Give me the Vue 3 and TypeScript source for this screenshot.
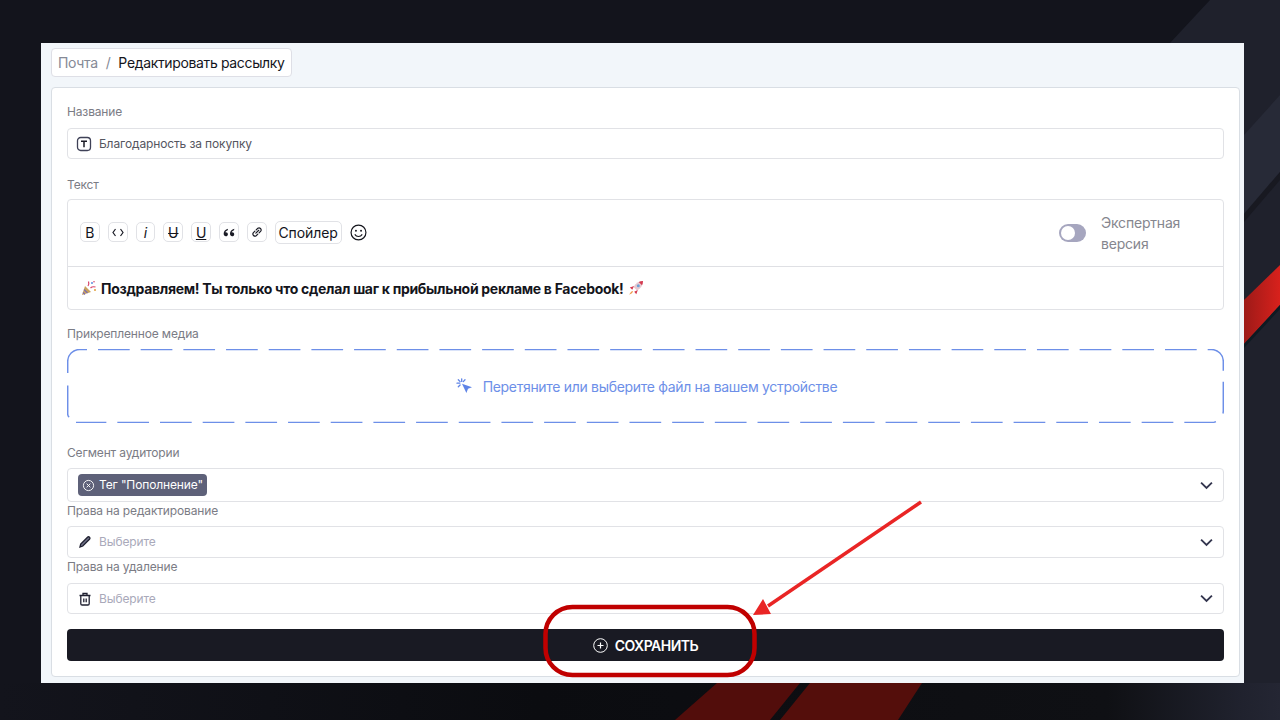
<script setup lang="ts">
</script>

<template>
  <div class="page">
    <svg class="backdrop" viewBox="0 0 1280 720" aria-hidden="true">
      <defs>
        <linearGradient id="fade" x1="0" x2="1" y1="0" y2="0">
          <stop offset="0" stop-color="#13141c" />
          <stop offset=".42" stop-color="#0b0c10" />
          <stop offset=".865" stop-color="#0f1014" />
          <stop offset=".97" stop-color="#20222e" />
          <stop offset="1" stop-color="#242633" />
        </linearGradient>
        <linearGradient id="red" x1="0" x2="1" y1="0" y2="0">
          <stop offset="0" stop-color="#9d1a18" />
          <stop offset="1" stop-color="#d8211c" />
        </linearGradient>
      </defs>
      <rect width="1280" height="720" fill="#13141c" />
      <polygon points="1170,43 1210,0 1280,0 1280,720 1100,720 1100,43" fill="#1f212c" />
      <polygon points="1244,135 1280,95 1280,172 1244,214" fill="#272a37" />
      <polygon points="1244,214 1280,172 1280,180 1244,222" fill="#181921" />
      <polygon points="1244,300 1280,265 1280,305 1244,344" fill="url(#red)" />
      <polygon points="1244,344 1280,305 1280,309 1244,348" fill="#0e1a22" />
      <rect y="683" width="1280" height="37" fill="url(#fade)" />
      <polygon points="717,683 800,683 770,720 675,720" fill="#520d0b" />
      <polygon points="810,683 922,683 898,720 780,720" fill="#540e0b" />
    </svg>

    <main class="panel">
      <nav class="crumbs">
        <span class="crumb-muted">Почта</span>
        <span class="crumb-muted">/</span>
        <span class="crumb-current">Редактировать рассылку</span>
      </nav>

      <section class="card">
        <label class="label gap-9">Название</label>
        <div class="field h31 name-field">
          <svg class="ico" viewBox="0 0 16 16" fill="none" stroke="#3f4157" stroke-width="1.3" aria-hidden="true">
            <rect x="1.5" y="1.5" width="13" height="13" rx="3.2" />
            <path d="M5 5.2h6M8 5.2v6" stroke="#1a1b25" stroke-width="1.5" />
          </svg>
          <span class="value">Благодарность за покупку</span>
        </div>

        <label class="label top-17 gap-7">Текст</label>
        <div class="editor">
          <div class="toolbar">
            <div class="tools">
              <button class="tool">B</button>
              <button class="tool">
                <svg width="12" height="9" viewBox="0 0 12 9" fill="none" stroke="#1a1b25" stroke-width="1.2" aria-hidden="true"><path d="M3.500 1 1 4.500 3.500 8M8.500 1 11 4.500 8.500 8" /></svg>
              </button>
              <button class="tool italic">i</button>
              <button class="tool strike">U</button>
              <button class="tool under">U</button>
              <button class="tool">
                <svg width="12" height="9" viewBox="0 0 11 8" fill="#1a1b25" aria-hidden="true"><path d="M4.600.6C2.200 1.400.6 2.800.6 5.100c0 1.400.9 2.300 2 2.300s1.900-.8 1.900-1.900-.8-1.800-1.900-1.800c-.2 0-.4 0-.5.1.2-.8 1-1.400 2.200-1.900zM10.400.6C8 1.400 6.400 2.800 6.400 5.100c0 1.400.9 2.300 2 2.300s1.900-.8 1.900-1.900-.8-1.800-1.900-1.800c-.2 0-.4 0-.5.1.2-.8 1-1.400 2.200-1.900z" /></svg>
              </button>
              <button class="tool">
                <svg width="14" height="14" viewBox="0 0 12 12" fill="none" stroke="#1a1b25" stroke-width="1" stroke-linecap="round" aria-hidden="true"><path d="M5 7 7.500 4.500M4.200 5.300 2.800 6.700a1.800 1.800 0 0 0 2.500 2.500l1.400-1.400M5.300 4.200l1.400-1.400a1.800 1.800 0 0 1 2.500 2.500L7.800 6.700" /></svg>
              </button>
              <button class="tool spoiler">Спойлер</button>
              <svg class="smile" viewBox="0 0 16 16" fill="none" stroke="#14151c" stroke-width="1.1" aria-hidden="true">
                <circle cx="8" cy="8" r="7" />
                <circle cx="5.600" cy="6.300" r=".9" fill="#14151c" stroke="none" />
                <circle cx="10.400" cy="6.300" r=".9" fill="#14151c" stroke="none" />
                <path d="M4.500 9.800c.8 1.300 2 2 3.500 2s2.700-.7 3.500-2" />
              </svg>
            </div>
            <div class="expert">
              <span class="toggle"><span class="knob"></span></span>
              <span class="expert-text">Экспертная версия</span>
            </div>
          </div>
          <div class="message">
            <svg class="emoji" viewBox="0 0 16 16" aria-hidden="true">
              <polygon points="1,15 4,6 10,12" fill="#c9a25c" />
              <path d="M2 12.500l2 2M3 9.500l3.500 3.500" stroke="#7b6bb0" stroke-width="1.100" />
              <path d="M7 6c1-1.500 1-3 .5-4.500M9.500 8c1.500-1.500 3-1.500 5-1" stroke="#d8456b" stroke-width="1.200" fill="none" />
              <circle cx="11" cy="3" r="1" fill="#5b8ee0" />
              <circle cx="14" cy="10" r="1" fill="#e0a03c" />
              <circle cx="13" cy="1.800" r=".8" fill="#d8456b" />
            </svg>
            <strong class="message-text">Поздравляем! Ты только что сделал шаг к прибыльной рекламе в Facebook!</strong>
            <svg class="emoji" viewBox="0 0 16 16" aria-hidden="true">
              <path d="M15 1c-4 0-7.500 2-9.500 6l3.500 3.500c4-2 6-5.500 6-9.500z" fill="#e8c9d0" />
              <path d="M15 1c-1.600 0-3 .3-4.300 1l3.300 3.300c.7-1.300 1-2.700 1-4.300z" fill="#d43a50" />
              <circle cx="10.300" cy="5.700" r="1.500" fill="#6ba3d8" />
              <path d="M6 6 1.800 7.500l2.500 2.300zM9.800 10 8.300 14.200 6.200 11.700z" fill="#d43a50" />
              <path d="M4.500 11C3 11.500 2 13 1.300 14.700c1.700-.7 3.200-1.700 3.700-3.200z" fill="#ef9a4a" />
            </svg>
          </div>
        </div>

        <label class="label top-15 gap-8">Прикрепленное медиа</label>
        <div class="drop">
          <svg class="drop-border" width="1157" height="74" fill="none" stroke="#6d8fe8" stroke-width="1.500" aria-hidden="true">
            <path d="M.7 24V12.500A12 12 0 0 1 12.500 .5H20" />
            <path d="M31 .5H1144.500A12 12 0 0 1 1156.300 12.500V61.500A12 12 0 0 1 1144.500 73.500H9" stroke-dasharray="31.700 10.980" />
            <path d="M.7 36.600V65c0 1.500.5 2.500 1.500 3" />
          </svg>
          <svg class="ico" viewBox="0 0 16 16" fill="#5f84e6" aria-hidden="true">
            <path d="M6 5.800 16 9.300l-4 1.500-1.600 4.200z" />
            <path d="M5.700 .8v2.600M1 5.200h2.800M2.300 1.800l1.800 1.800M9 1.800 7.300 3.600M2.300 8.800l1.800-1.800" stroke="#5f84e6" stroke-width="1.300" stroke-linecap="round" />
          </svg>
          <span class="drop-text">Перетяните или выберите файл на вашем устройстве</span>
        </div>

        <label class="label top-21 gap-8">Сегмент аудитории</label>
        <div class="field h34 select tagged">
          <span class="tag">
            <svg width="13" height="13" viewBox="0 0 14 14" fill="none" stroke="#fff" stroke-width="1" aria-hidden="true"><circle cx="7" cy="7" r="5.500" /><path d="m5 5 4 4M9 5l-4 4" /></svg>
            Тег "Пополнение"
          </span>
          <svg class="chev" viewBox="0 0 12 8" fill="none" stroke="#34364f" stroke-width="1.700" aria-hidden="true"><path d="M1 1.300 6 6.300l5-5" /></svg>
        </div>

        <label class="label gap-8">Права на редактирование</label>
        <div class="field h32 select">
          <svg class="ico" viewBox="0 0 16 16" fill="none" stroke="#1f2030" stroke-width="1.300" aria-hidden="true"><path d="M3 13l.7-3 6.800-6.800c.6-.6 1.500-.6 2 0 .6.600.6 1.400 0 2L5.800 12z" fill="#6d6f85" /></svg>
          <span class="placeholder">Выберите</span>
          <svg class="chev" viewBox="0 0 12 8" fill="none" stroke="#34364f" stroke-width="1.700" aria-hidden="true"><path d="M1 1.300 6 6.300l5-5" /></svg>
        </div>

        <label class="label gap-9">Права на удаление</label>
        <div class="field h31 select">
          <svg class="ico" viewBox="0 0 16 16" fill="none" stroke="#1f2030" stroke-width="1.300" aria-hidden="true"><path d="M2.500 4.500h11M6 4.200V2.500h4v1.700M3.800 4.500v8.200c0 .8.500 1.300 1.300 1.300h5.800c.8 0 1.300-.5 1.300-1.300V4.500M6.800 7.500v3.800M9.200 7.500v3.800" /></svg>
          <span class="placeholder">Выберите</span>
          <svg class="chev" viewBox="0 0 12 8" fill="none" stroke="#34364f" stroke-width="1.700" aria-hidden="true"><path d="M1 1.300 6 6.300l5-5" /></svg>
        </div>

        <button class="save">
          <svg width="15" height="15" viewBox="0 0 15 15" fill="none" stroke="#fff" stroke-width="1" aria-hidden="true"><circle cx="7.500" cy="7.500" r="6.800" /><path d="M7.500 4.500v6M4.500 7.500h6" stroke-width="1.200" /></svg>
          СОХРАНИТЬ
        </button>
      </section>
    </main>

    <svg class="annotation" viewBox="0 0 1280 720" aria-hidden="true">
      <rect x="545.500" y="607" width="209" height="68" rx="27" fill="none" stroke="#c00000" stroke-width="4.500" />
      <path d="M921 502 768 606" stroke="#e92525" stroke-width="3.500" />
      <polygon points="753,615 763,599 771,614" fill="#e92525" />
    </svg>
  </div>
</template>

<style>
html, body { margin: 0; background: #13141c; }
</style>

<style scoped>
.page {
  position: relative;
  width: 1280px;
  height: 720px;
  overflow: hidden;
  padding: 43px 36px 37px 41px;
  box-sizing: border-box;
  font-family: Inter, "Noto Sans", sans-serif;
  color: #14151c;
}
.backdrop, .annotation {
  position: absolute;
  inset: 0;
  width: 1280px;
  height: 720px;
  pointer-events: none;
}
.panel {
  position: relative;
  height: 640px;
  box-sizing: border-box;
  background: #f2f6fa;
  padding: 5px 4px 6px 10px;
  display: flex;
  flex-direction: column;
  gap: 10px;
}
.crumbs {
  align-self: flex-start;
  height: 29px;
  box-sizing: border-box;
  display: flex;
  align-items: center;
  gap: 8px;
  padding: 0 6px;
  background: #fff;
  border: 1px solid #dedfe6;
  border-radius: 4px;
  font-size: 14px;
  letter-spacing: -0.35px;
  white-space: nowrap;
}
.crumb-muted { color: #858a96; }
.crumb-current { color: #14151c; }
.card {
  flex: 1;
  min-height: 0;
  box-sizing: border-box;
  background: #fff;
  border: 1px solid #d9dee4;
  border-radius: 4px;
  padding: 15px 15px 15px;
  display: flex;
  flex-direction: column;
}
.label {
  display: block;
  height: 16px;
  line-height: 17px;
  font-size: 12px;
  letter-spacing: -0.15px;
  color: #7b7c85;
  white-space: nowrap;
}
.gap-7 { margin-bottom: 7px; }
.gap-8 { margin-bottom: 8px; }
.gap-9 { margin-bottom: 9px; }
.top-15 { margin-top: 15px; }
.top-17 { margin-top: 17px; }
.top-21 { margin-top: 21px; }
.field {
  position: relative;
  box-sizing: border-box;
  flex: none;
  display: flex;
  align-items: center;
  gap: 6px;
  padding: 0 10px 0 9px;
  border: 1px solid #e1e2e6;
  border-radius: 4px;
  font-size: 12px;
  line-height: 14px;
  letter-spacing: -0.13px;
  background: #fff;
}
.name-field { padding-left: 8px; gap: 7px; }
.h31 { height: 31px; }
.h32 { height: 32px; }
.h34 { height: 34px; }
.tagged { padding-left: 10px; }
.ico { width: 16px; height: 16px; flex: none; }
.value { color: #55565f; }
.placeholder { color: #a9a9ba; }
.chev { width: 13px; height: 9px; margin-left: auto; }
.editor {
  flex: none;
  height: 111px;
  box-sizing: border-box;
  border: 1px solid #e1e2e6;
  border-radius: 4px;
  display: flex;
  flex-direction: column;
}
.toolbar {
  height: 67px;
  flex: none;
  box-sizing: border-box;
  border-bottom: 1px solid #dfe0e4;
  display: flex;
  align-items: center;
  justify-content: space-between;
  padding: 0 42px 2px 12px;
}
.tools { display: flex; align-items: center; gap: 8px; }
.tool {
  width: 19.800px;
  height: 20px;
  padding: 0;
  box-sizing: border-box;
  display: flex;
  align-items: center;
  justify-content: center;
  background: #fff;
  border: 1px solid #e1e2e6;
  border-radius: 5px;
  font: 14px Inter, sans-serif;
  color: #14151c;
}
.italic { font-style: italic; }
.strike { text-decoration: line-through; }
.under { text-decoration: underline; }
.spoiler {
  width: 67px;
  height: 23px;
  font-size: 14px;
  letter-spacing: -0.1px;
}
.smile { width: 17px; height: 17px; }
.expert { display: flex; align-items: center; gap: 15px; margin-top: 2px; }
.toggle {
  width: 27px;
  height: 18px;
  border-radius: 9px;
  background: #a6a6bf;
  display: flex;
  align-items: center;
  padding-left: 2px;
  box-sizing: border-box;
}
.knob { width: 14px; height: 14px; border-radius: 50%; background: #fff; }
.expert-text {
  width: 80px;
  font-size: 14px;
  line-height: 21px;
  letter-spacing: -0.2px;
  color: #85868e;
}
.message {
  flex: 1;
  display: flex;
  align-items: center;
  gap: 4px;
  padding-left: 13px;
}
.emoji { width: 16px; height: 16px; flex: none; }
.message-text { font-size: 14px; font-weight: 700; letter-spacing: -0.3px; color: #14151c; white-space: nowrap; }
.drop {
  position: relative;
  flex: none;
  height: 74px;
  box-sizing: border-box;
  padding-left: 2px;
  display: flex;
  align-items: center;
  justify-content: center;
  gap: 11px;
  font-size: 14px;
  letter-spacing: -0.31px;
  color: #6d8fe8;
}
.drop-border { position: absolute; left: 0; top: 0; }
.tag {
  height: 22px;
  display: inline-flex;
  align-items: center;
  gap: 4px;
  padding: 0 4px;
  background: #5e6179;
  border-radius: 4px;
  color: #fff;
  font-size: 12px;
  white-space: nowrap;
}
.save {
  flex: none;
  height: 32px;
  margin-top: 15px;
  border: 0;
  border-radius: 4px;
  background: #191a23;
  color: #fff;
  font: 600 14px Inter, sans-serif;
  letter-spacing: -0.5px;
  display: flex;
  align-items: center;
  justify-content: center;
  gap: 7px;
}
</style>
